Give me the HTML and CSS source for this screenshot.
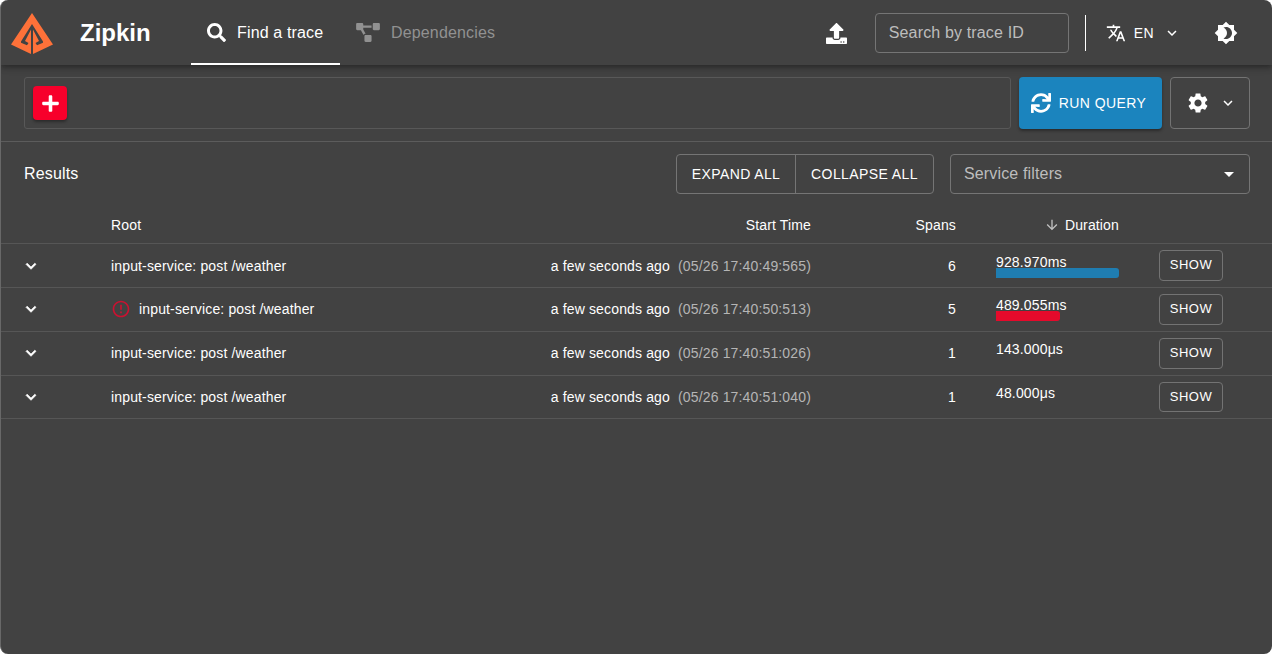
FILE: index.html
```html
<!DOCTYPE html>
<html lang="en">
<head>
<meta charset="utf-8">
<title>Zipkin</title>
<link rel="stylesheet" href="styles.css">
</head>
<body>
<svg class="defs" width="0" height="0">
  <symbol id="chevron" viewBox="0 0 24 24"><path d="M7.41 8.59 12 13.17l4.59-4.58L18 10l-6 6-6-6 1.41-1.41z"/></symbol>
</svg>
<div class="window">
  <header class="appbar">
    <svg class="logo" viewBox="0 0 42 42"><path fill-rule="evenodd" d="M21 0 42 31.500 22 41V16.500L28 27.900 24.500 30 26 32.300 32 29.800V28.500L21 11 10 28.500V29.800L16 32.300 17.500 30 14 27.900 20 16.500V41L0 31.500Z"/></svg>
    <h1 class="brand">Zipkin</h1>
    <nav class="tabs">
      <a class="tab tab-active"><svg class="icon-search" viewBox="0 0 512 512"><path d="M505 442.700L405.300 343c-4.500-4.500-10.600-7-17-7H372c27.600-35.300 44-79.700 44-128C416 93.100 322.900 0 208 0S0 93.100 0 208s93.100 208 208 208c48.300 0 92.700-16.400 128-44v16.300c0 6.400 2.500 12.500 7 17l99.700 99.700c9.400 9.400 24.600 9.400 33.900 0l28.300-28.300c9.400-9.400 9.400-24.600.1-34zM208 336c-70.700 0-128-57.200-128-128 0-70.700 57.200-128 128-128 70.700 0 128 57.200 128 128 0 70.700-57.200 128-128 128z"/></svg>Find a trace</a>
      <a class="tab"><svg class="icon-diagram" viewBox="0 0 640 512"><path d="M384 320H256c-17.670 0-32 14.330-32 32v128c0 17.670 14.330 32 32 32h128c17.670 0 32-14.330 32-32V352c0-17.670-14.330-32-32-32zM192 32c0-17.670-14.330-32-32-32H32C14.330 0 0 14.330 0 32v128c0 17.670 14.330 32 32 32h95.720l73.160 128.040C211.980 300.980 232.400 288 256 288h.28L192 175.510V128h224V64H192V32zM608 0H480c-17.670 0-32 14.330-32 32v128c0 17.670 14.330 32 32 32h128c17.670 0 32-14.330 32-32V32c0-17.670-14.330-32-32-32z"/></svg>Dependencies</a>
    </nav>
    <div class="appbar-right">
      <svg class="icon-upload" viewBox="0 0 512 512"><path d="M296 384h-80c-13.300 0-24-10.700-24-24V192h-87.700c-17.800 0-26.700-21.500-14.100-34.100L242.300 5.700c7.500-7.500 19.800-7.500 27.300 0l152.200 152.200c12.600 12.600 3.700 34.100-14.100 34.100H320v168c0 13.300-10.700 24-24 24zm216-8v112c0 13.300-10.700 24-24 24H24c-13.300 0-24-10.700-24-24V376c0-13.300 10.700-24 24-24h136v8c0 30.900 25.100 56 56 56h80c30.900 0 56-25.100 56-56v-8h136c13.300 0 24 10.700 24 24zm-124 88c0-11-9-20-20-20s-20 9-20 20 9 20 20 20 20-9 20-20zm64 0c0-11-9-20-20-20s-20 9-20 20 9 20 20 20 20-9 20-20z"/></svg>
      <div class="search">Search by trace ID</div>
      <div class="separator"></div>
      <div class="language"><svg class="icon-translate" viewBox="0 0 24 24"><path d="M12.870 15.070l-2.540-2.510.03-.03c1.740-1.940 2.980-4.170 3.710-6.530H17V4h-7V2H8v2H1v1.990h11.170C11.500 7.920 10.440 9.750 9 11.350 8.070 10.320 7.300 9.190 6.690 8h-2c.73 1.630 1.730 3.170 2.980 4.560l-5.090 5.020L4 19l5-5 3.110 3.110.76-2.040zM18.500 10h-2L12 22h2l1.120-3h4.750L21 22h2l-4.500-12zm-2.620 7l1.620-4.330L19.120 17h-3.240z"/></svg><span>EN</span><svg class="icon-caret"><use href="#chevron"/></svg></div>
      <svg class="icon-theme" viewBox="0 0 24 24"><path d="M20 8.690V4h-4.690L12 .69 8.690 4H4v4.690L.69 12 4 15.310V20h4.690L12 23.310 15.310 20H20v-4.690L23.310 12 20 8.690zM12 18c-.89 0-1.740-.2-2.500-.55C11.560 16.500 13 14.420 13 12s-1.440-4.500-3.500-5.450C10.260 6.200 11.110 6 12 6c3.310 0 6 2.690 6 6s-2.690 6-6 6z"/></svg>
    </div>
  </header>

  <section class="query">
    <div class="criteria"><button class="add"><svg viewBox="0 0 448 512"><path d="M416 208H272V64c0-17.670-14.330-32-32-32h-32c-17.670 0-32 14.330-32 32v144H32c-17.670 0-32 14.330-32 32v32c0 17.670 14.330 32 32 32h144v144c0 17.670 14.330 32 32 32h32c17.670 0 32-14.330 32-32V304h144c17.670 0 32-14.330 32-32v-32c0-17.670-14.330-32-32-32z"/></svg></button></div>
    <button class="run"><svg viewBox="0 0 512 512"><path d="M440.650 12.570l4 82.770A247.160 247.160 0 0 0 255.830 8C134.730 8 33.910 94.920 12.290 209.820A12 12 0 0 0 24.090 224h49.050a12 12 0 0 0 11.670-9.260 175.910 175.910 0 0 1 317-56.940l-101.460-4.860a12 12 0 0 0-12.570 12v47.410a12 12 0 0 0 12 12H500a12 12 0 0 0 12-12V12a12 12 0 0 0-12-12h-47.370a12 12 0 0 0-11.980 12.570zM255.830 432a175.610 175.610 0 0 1-146-77.800l101.800 4.870a12 12 0 0 0 12.570-12v-47.400a12 12 0 0 0-12-12H12a12 12 0 0 0-12 12V500a12 12 0 0 0 12 12h47.350a12 12 0 0 0 12-12.600l-4.150-82.570A247.170 247.170 0 0 0 255.830 504c121.110 0 221.930-86.920 243.550-201.820a12 12 0 0 0-11.800-14.180h-49.050a12 12 0 0 0-11.670 9.260A175.860 175.860 0 0 1 255.830 432z"/></svg>Run Query</button>
    <button class="settings"><svg class="icon-gear" viewBox="0 0 24 24"><path d="M19.140 12.940c.04-.3.06-.61.06-.94 0-.32-.02-.64-.07-.94l2.030-1.580c.18-.14.23-.41.12-.61l-1.920-3.320c-.12-.22-.37-.29-.59-.22l-2.390.96c-.5-.38-1.030-.7-1.620-.94l-.36-2.540c-.04-.24-.24-.41-.48-.41h-3.840c-.24 0-.43.17-.47.41l-.36 2.540c-.59.24-1.130.57-1.620.94l-2.390-.96c-.22-.08-.47 0-.59.22L2.740 8.870c-.12.21-.08.47.12.61l2.030 1.580c-.05.3-.09.63-.09.94s.02.64.07.94l-2.030 1.580c-.18.14-.23.41-.12.61l1.920 3.320c.12.22.37.29.59.22l2.390-.96c.5.38 1.030.7 1.620.94l.36 2.540c.05.24.24.41.48.41h3.840c.24 0 .44-.17.47-.41l.36-2.540c.59-.24 1.130-.56 1.620-.94l2.390.96c.22.08.47 0 .59-.22l1.920-3.320c.12-.22.07-.47-.12-.61l-2.010-1.580zM12 15.600c-1.980 0-3.600-1.620-3.600-3.600s1.620-3.600 3.600-3.600 3.600 1.620 3.600 3.600-1.620 3.600-3.600 3.600z"/></svg><svg class="icon-caret"><use href="#chevron"/></svg></button>
  </section>

  <section class="results-bar">
    <h2 class="results-title">Results</h2>
    <div class="group"><button class="group-expand">Expand All</button><button class="group-collapse">Collapse All</button></div>
    <div class="filters">Service filters<svg viewBox="0 0 24 24"><path d="M7 10l5 5 5-5z"/></svg></div>
  </section>

  <main class="table">
    <div class="row head">
      <span></span><span>Root</span><span class="num">Start Time</span><span class="num">Spans</span>
      <span class="sorted"><svg viewBox="0 0 24 24"><path d="M20 12l-1.410-1.410L13 16.170V4h-2v12.170l-5.580-5.590L4 12l8 8 8-8z"/></svg>Duration</span><span></span>
    </div>
    <div class="row">
      <svg class="expander"><use href="#chevron"/></svg><span class="root">input-service: post /weather</span>
      <span class="num">a few seconds ago<span class="stamp">(05/26 17:40:49:565)</span></span><span class="num">6</span>
      <div class="duration"><span class="bar" style="width:100%"></span><span class="value">928.970ms</span></div><button class="show">Show</button>
    </div>
    <div class="row row-raised">
      <svg class="expander"><use href="#chevron"/></svg><span class="root"><svg class="error" viewBox="0 0 24 24"><path d="M11 15h2v2h-2zm0-8h2v6h-2zm.99-5C6.470 2 2 6.480 2 12s4.470 10 9.990 10C17.520 22 22 17.520 22 12S17.520 2 11.990 2zM12 20c-4.420 0-8-3.580-8-8s3.580-8 8-8 8 3.580 8 8-3.580 8-8 8z"/></svg>input-service: post /weather</span>
      <span class="num">a few seconds ago<span class="stamp">(05/26 17:40:50:513)</span></span><span class="num">5</span>
      <div class="duration"><span class="bar bar-error" style="width:52.3%"></span><span class="value">489.055ms</span></div><button class="show">Show</button>
    </div>
    <div class="row row-raised">
      <svg class="expander"><use href="#chevron"/></svg><span class="root">input-service: post /weather</span>
      <span class="num">a few seconds ago<span class="stamp">(05/26 17:40:51:026)</span></span><span class="num">1</span>
      <div class="duration"><span class="value">143.000μs</span></div><button class="show">Show</button>
    </div>
    <div class="row row-last">
      <svg class="expander"><use href="#chevron"/></svg><span class="root">input-service: post /weather</span>
      <span class="num">a few seconds ago<span class="stamp">(05/26 17:40:51:040)</span></span><span class="num">1</span>
      <div class="duration"><span class="value">48.000μs</span></div><button class="show">Show</button>
    </div>
  </main>
</div>
</body>
</html>
```
FILE: styles.css
```css
* { box-sizing: border-box; }
body { margin: 0; background: #fff; font-family: "Liberation Sans", Arial, sans-serif; color: #fff; }
svg { fill: currentColor; flex: none; display: block; }
button { font: inherit; color: inherit; background: none; margin: 0; padding: 0; display: flex; align-items: center; justify-content: center; text-transform: uppercase; }
.defs { display: none; }
.window { height: 654px; background: #424242; border-left: 1px solid #686868; border-radius: 8px; overflow: hidden; display: flex; flex-direction: column; }

.appbar { height: 65px; flex: none; display: flex; padding: 0 34px 0 10px; box-shadow: 0 2px 4px -1px rgba(0,0,0,.2), 0 4px 5px rgba(0,0,0,.14), 0 1px 10px rgba(0,0,0,.12); }
.logo { width: 42px; height: 42px; margin-top: 13px; color: #fe7139; }
.brand { margin: 0 0 0 27px; width: 111px; font-size: 24px; line-height: 65px; font-weight: 700; }
.tabs { display: flex; }
.tab { display: flex; align-items: center; padding: 0 16px; font-size: 16px; letter-spacing: .15px; color: #919191; }
.tab-active { color: #fff; border-bottom: 2px solid #fff; padding-top: 2px; width: 149px; }
.icon-search { width: 19px; height: 19px; margin-right: 11px; }
.icon-diagram { width: 24px; height: 19px; margin-right: 11px; }
.appbar-right { margin-left: auto; display: flex; align-items: center; }
.icon-upload { width: 21px; height: 21px; margin-right: 28px; margin-top: 2px; }
.search { width: 194px; height: 40px; border: 1px solid #757575; border-radius: 4px; padding: 0 13px; line-height: 38px; font-size: 16px; letter-spacing: .15px; color: #bdbdbd; }
.separator { width: 1px; height: 36px; background: #fff; margin: 0 20px 0 16px; }
.language { display: flex; align-items: center; font-size: 14px; letter-spacing: .4px; }
.icon-translate { width: 20px; height: 20px; margin-right: 8px; }
.icon-caret { width: 18px; height: 18px; }
.language .icon-caret { margin-left: 9px; margin-right: 33px; }
.icon-theme { width: 24px; height: 24px; }

.query { height: 77px; flex: none; display: flex; gap: 8px; padding: 12px 22px 12px 23px; border-bottom: 1px solid #5c5c5c; }
.criteria { flex: 1; border: 1px solid #585858; border-radius: 3px; padding: 8px; }
.add { width: 34px; height: 34px; border: 0; border-radius: 4px; background: #f7002b; box-shadow: 0 2px 3px rgba(0,0,0,.35); }
.add svg { width: 17px; height: 19px; }
.run { width: 143px; height: 52px; padding-right: 4px; border: 0; border-radius: 4px; background: #1b84be; font-size: 14px; letter-spacing: .4px; box-shadow: 0 2px 3px rgba(0,0,0,.35); }
.run svg { width: 20px; height: 20px; margin-right: 8px; }
.settings { width: 80px; height: 52px; border: 1px solid #737373; border-radius: 4px; gap: 9px; padding-left: 2px; }
.icon-gear { width: 24px; height: 24px; }

.results-bar { height: 65px; flex: none; display: flex; padding: 12px 22px 0 23px; }
.results-title { margin: 0 auto 0 0; font-size: 16px; font-weight: 400; line-height: 40px; letter-spacing: .15px; }
.group { display: flex; height: 40px; border: 1px solid #757575; border-radius: 4px; font-size: 14px; }
.group-expand { width: 119px; border: 0; border-right: 1px solid #757575; letter-spacing: .4px; }
.group-collapse { width: 137px; border: 0; letter-spacing: .4px; }
.filters { width: 300px; height: 40px; margin-left: 16px; padding: 0 8px 0 13px; border: 1px solid #757575; border-radius: 4px; display: flex; align-items: center; justify-content: space-between; font-size: 16px; letter-spacing: .15px; color: #bdbdbd; }
.filters svg { width: 24px; height: 24px; color: #fff; }

.table { font-size: 14px; letter-spacing: .15px; }
.row { display: grid; grid-template-columns: 87px 400px 300px 145px 163px 104px; height: 44px; align-items: center; border-bottom: 1px solid #565656; padding-left: 23px; }
.head { height: 37px; }
.row-last { height: 43px; }
.row-raised > :not(.show) { margin-bottom: 2px; }
.num { text-align: right; white-space: nowrap; }
.stamp { margin-left: 8px; color: #b5b5b5; }
.sorted { display: flex; align-items: center; justify-content: flex-end; }
.sorted svg { width: 16px; height: 16px; margin-right: 5px; color: #c0c0c0; }
.expander { width: 20px; height: 20px; margin-left: -3px; stroke: currentColor; stroke-width: .8px; }
.root { display: flex; align-items: center; }
.error { width: 20px; height: 20px; margin-right: 8px; color: #ca1231; }
.duration { margin-left: 40px; width: 123px; height: 20px; position: relative; }
.bar { position: absolute; left: 0; bottom: -2px; height: 10px; background: #1f7db1; border-radius: 0 3px 3px 0; }
.bar-error { background: #e50a2b; }
.value { position: absolute; left: 0; top: -2px; line-height: 16px; }
.show { width: 64px; height: 31px; margin-left: 40px; padding-bottom: 2px; border: 1px solid #737373; border-radius: 4px; font-size: 13px; letter-spacing: .46px; }
.row-last .show { height: 30px; }
```
